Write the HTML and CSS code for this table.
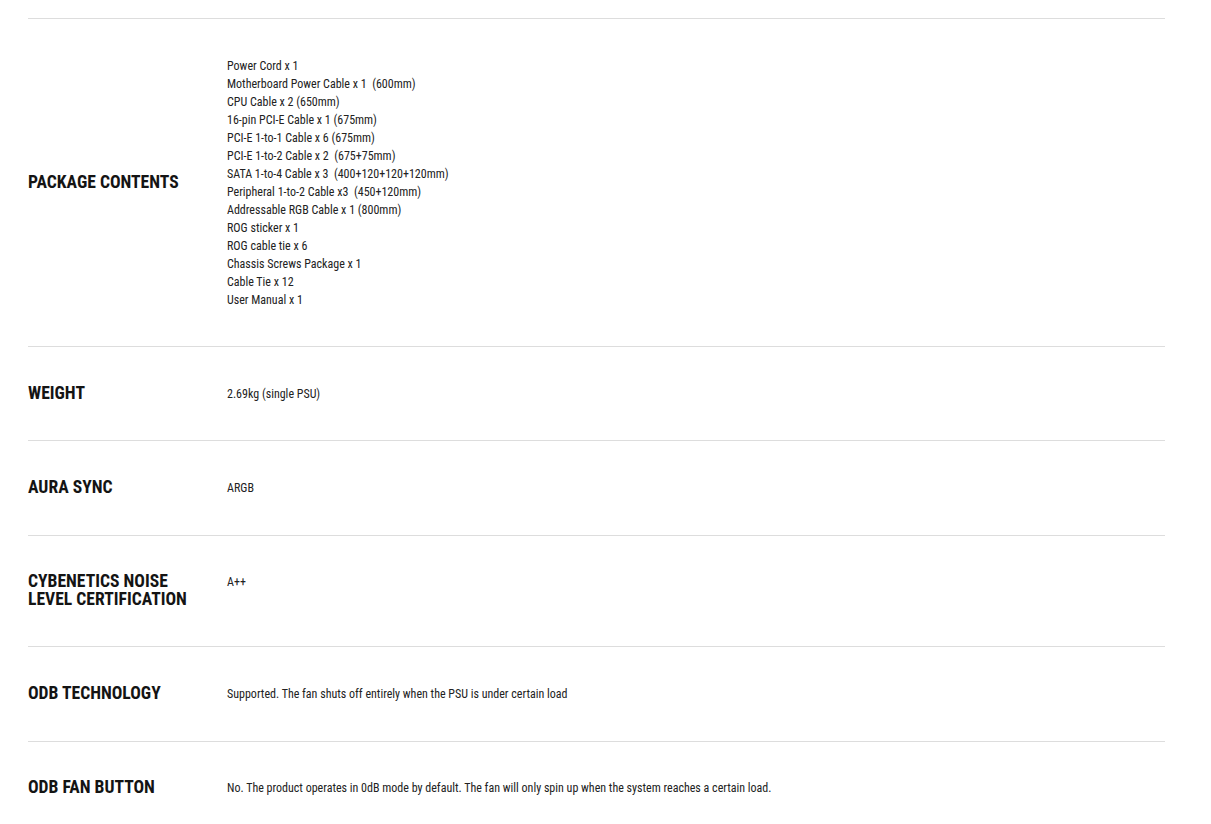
FILE: index.html
```html
<!DOCTYPE html>
<html>
<head>
<link rel="stylesheet" href="styles.css">
</head>
<body>
<div class="specs">
  <div class="row">
    <h3 class="label">PACKAGE CONTENTS</h3>
    <div class="value">
      Power Cord x 1<br>
      Motherboard Power Cable x 1&nbsp; (600mm)<br>
      CPU Cable x 2 (650mm)<br>
      16-pin PCI-E Cable x 1 (675mm)<br>
      PCI-E 1-to-1 Cable x 6 (675mm)<br>
      PCI-E 1-to-2 Cable x 2&nbsp; (675+75mm)<br>
      SATA 1-to-4 Cable x 3&nbsp; (400+120+120+120mm)<br>
      Peripheral 1-to-2 Cable x3&nbsp; (450+120mm)<br>
      Addressable RGB Cable x 1 (800mm)<br>
      ROG sticker x 1<br>
      ROG cable tie x 6<br>
      Chassis Screws Package x 1<br>
      Cable Tie x 12<br>
      User Manual x 1
    </div>
  </div>
  <div class="row">
    <h3 class="label">WEIGHT</h3>
    <div class="value">2.69kg (single PSU)</div>
  </div>
  <div class="row">
    <h3 class="label">AURA SYNC</h3>
    <div class="value">ARGB</div>
  </div>
  <div class="row">
    <h3 class="label">CYBENETICS NOISE LEVEL CERTIFICATION</h3>
    <div class="value">A++</div>
  </div>
  <div class="row">
    <h3 class="label">ODB TECHNOLOGY</h3>
    <div class="value">Supported. The fan shuts off entirely when the PSU is under certain load</div>
  </div>
  <div class="row">
    <h3 class="label">ODB FAN BUTTON</h3>
    <div class="value">No. The product operates in 0dB mode by default. The fan will only spin up when the system reaches a certain load.</div>
  </div>
</div>
</body>
</html>
```
FILE: styles.css
```css
* {box-sizing: border-box;}

body {
  margin: 0;
  background-color: #fff;
  font-family: "Roboto Condensed", "Liberation Sans Narrow", "DejaVu Sans Condensed", Roboto, sans-serif;
}

.specs {
  width: 1137px;
  margin: 18px 0 0 28px;
}

.row {
  display: flex;
  align-items: center;
  border-top: 1px solid #ddd;
  padding: 37.6px 0;
}

.label {
  width: 199px;
  margin: 0;
  padding-right: 20px;
  font-size: 17.6px;
  line-height: 17.8px;
  font-weight: 700;
  color: #141414;
}

.value {
  align-self: flex-start;
  font-size: 12px;
  line-height: 18px;
  color: #222;
}
```
